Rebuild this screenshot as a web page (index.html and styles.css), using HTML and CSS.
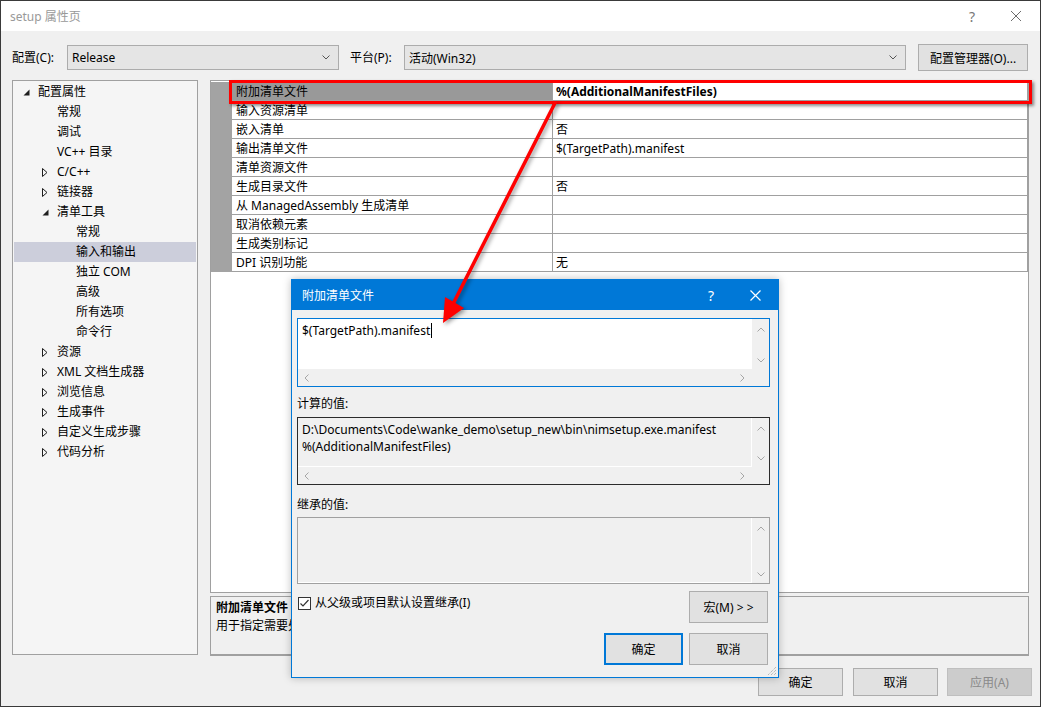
FILE: index.html
```html
<!DOCTYPE html>
<html lang="zh-CN">
<head>
  <meta charset="UTF-8">
  <title>setup 属性页</title>
  <link rel="stylesheet" href="styles.css">
</head>
<body>
<div class="window">
  <!-- 标题栏 -->
  <div class="titlebar">
    <span class="titlebar-text">setup 属性页</span>
    <span class="titlebar-help">?</span>
    <span class="titlebar-close">
      <svg viewBox="0 0 10 10" width="10" height="10"><path d="M0 0L10 10M10 0L0 10" stroke="#6d6d6d" stroke-width="1"/></svg>
    </span>
  </div>

  <!-- 配置 / 平台 -->
  <div class="toolbar">
    <span class="tb-label tb-label-config">配置(C):</span>
    <div class="combo combo-config">
      <span class="combo-text">Release</span>
      <svg class="combo-arrow" viewBox="0 0 8 5" width="8" height="5"><polyline points="0.5,0.5 4,4 7.5,0.5" fill="none" stroke="#555"/></svg>
    </div>
    <span class="tb-label tb-label-platform">平台(P):</span>
    <div class="combo combo-platform">
      <span class="combo-text">活动(Win32)</span>
      <svg class="combo-arrow" viewBox="0 0 8 5" width="8" height="5"><polyline points="0.5,0.5 4,4 7.5,0.5" fill="none" stroke="#555"/></svg>
    </div>
    <button class="btn btn-manager">配置管理器(O)...</button>
  </div>

  <div class="main">
    <!-- 左侧树 -->
    <ul class="tree">
      <li class="node l0"><span class="toggle"><svg width="7" height="7"><polygon points="6.5,0.5 6.5,6.5 0.5,6.5" fill="#1e1e1e"/></svg></span>配置属性</li>
      <li class="node l1"><span class="toggle"></span>常规</li>
      <li class="node l1"><span class="toggle"></span>调试</li>
      <li class="node l1"><span class="toggle"></span>VC++ 目录</li>
      <li class="node l1"><span class="toggle"><svg width="6" height="9"><polygon points="0.5,0.5 5,4.5 0.5,8.5" fill="none" stroke="#1e1e1e"/></svg></span>C/C++</li>
      <li class="node l1"><span class="toggle"><svg width="6" height="9"><polygon points="0.5,0.5 5,4.5 0.5,8.5" fill="none" stroke="#1e1e1e"/></svg></span>链接器</li>
      <li class="node l1"><span class="toggle"><svg width="7" height="7"><polygon points="6.5,0.5 6.5,6.5 0.5,6.5" fill="#1e1e1e"/></svg></span>清单工具</li>
      <li class="node l2"><span class="toggle"></span>常规</li>
      <li class="node l2 selected"><span class="toggle"></span>输入和输出</li>
      <li class="node l2"><span class="toggle"></span>独立 COM</li>
      <li class="node l2"><span class="toggle"></span>高级</li>
      <li class="node l2"><span class="toggle"></span>所有选项</li>
      <li class="node l2"><span class="toggle"></span>命令行</li>
      <li class="node l1"><span class="toggle"><svg width="6" height="9"><polygon points="0.5,0.5 5,4.5 0.5,8.5" fill="none" stroke="#1e1e1e"/></svg></span>资源</li>
      <li class="node l1"><span class="toggle"><svg width="6" height="9"><polygon points="0.5,0.5 5,4.5 0.5,8.5" fill="none" stroke="#1e1e1e"/></svg></span>XML 文档生成器</li>
      <li class="node l1"><span class="toggle"><svg width="6" height="9"><polygon points="0.5,0.5 5,4.5 0.5,8.5" fill="none" stroke="#1e1e1e"/></svg></span>浏览信息</li>
      <li class="node l1"><span class="toggle"><svg width="6" height="9"><polygon points="0.5,0.5 5,4.5 0.5,8.5" fill="none" stroke="#1e1e1e"/></svg></span>生成事件</li>
      <li class="node l1"><span class="toggle"><svg width="6" height="9"><polygon points="0.5,0.5 5,4.5 0.5,8.5" fill="none" stroke="#1e1e1e"/></svg></span>自定义生成步骤</li>
      <li class="node l1"><span class="toggle"><svg width="6" height="9"><polygon points="0.5,0.5 5,4.5 0.5,8.5" fill="none" stroke="#1e1e1e"/></svg></span>代码分析</li>
    </ul>

    <!-- 右侧属性表 -->
    <div class="right">
      <div class="grid">
        <div class="prop-row selected"><span class="pm"></span><span class="pn">附加清单文件</span><span class="pv">%(AdditionalManifestFiles)</span></div>
        <div class="prop-row"><span class="pm"></span><span class="pn">输入资源清单</span><span class="pv"></span></div>
        <div class="prop-row"><span class="pm"></span><span class="pn">嵌入清单</span><span class="pv">否</span></div>
        <div class="prop-row"><span class="pm"></span><span class="pn">输出清单文件</span><span class="pv">$(TargetPath).manifest</span></div>
        <div class="prop-row"><span class="pm"></span><span class="pn">清单资源文件</span><span class="pv"></span></div>
        <div class="prop-row"><span class="pm"></span><span class="pn">生成目录文件</span><span class="pv">否</span></div>
        <div class="prop-row"><span class="pm"></span><span class="pn">从 ManagedAssembly 生成清单</span><span class="pv"></span></div>
        <div class="prop-row"><span class="pm"></span><span class="pn">取消依赖元素</span><span class="pv"></span></div>
        <div class="prop-row"><span class="pm"></span><span class="pn">生成类别标记</span><span class="pv"></span></div>
        <div class="prop-row"><span class="pm"></span><span class="pn">DPI 识别功能</span><span class="pv">无</span></div>
      </div>
      <div class="desc">
        <div class="desc-title">附加清单文件</div>
        <div class="desc-text">用于指定需要处理的其他清单文件。</div>
      </div>
    </div>
  </div>

  <div class="footer">
    <button class="btn btn-foot btn-ok">确定</button>
    <button class="btn btn-foot btn-cancel">取消</button>
    <button class="btn btn-foot btn-apply" disabled>应用(A)</button>
  </div>

  <!-- 弹出的编辑对话框 -->
  <div class="dialog">
    <div class="dlg-title">
      <span class="dlg-title-text">附加清单文件</span>
      <span class="dlg-help">?</span>
      <span class="dlg-close">
        <svg viewBox="0 0 11 11" width="11" height="11"><path d="M0.5 0.5L10.5 10.5M10.5 0.5L0.5 10.5" stroke="#fff" stroke-width="1.2"/></svg>
      </span>
    </div>
    <div class="dlg-body">
      <div class="editbox editbox-active">
        <div class="editbox-text">$(TargetPath).manifest<span class="caret"></span></div>
        <div class="vscroll">
          <svg width="8" height="5"><polyline points="0.5,4.5 4,1 7.5,4.5" fill="none" stroke="#a6a6a6"/></svg>
          <svg width="8" height="5"><polyline points="0.5,0.5 4,4 7.5,0.5" fill="none" stroke="#a6a6a6"/></svg>
        </div>
        <div class="hscroll">
          <svg width="5" height="8"><polyline points="4.5,0.5 1,4 4.5,7.5" fill="none" stroke="#a6a6a6"/></svg>
          <svg width="5" height="8"><polyline points="0.5,0.5 4,4 0.5,7.5" fill="none" stroke="#a6a6a6"/></svg>
        </div>
        <div class="corner"></div>
      </div>

      <div class="dlg-label dlg-label-eval">计算的值:</div>
      <div class="editbox editbox-eval">
        <div class="editbox-text">D:\Documents\Code\wanke_demo\setup_new\bin\nimsetup.exe.manifest<br>%(AdditionalManifestFiles)</div>
        <div class="vscroll">
          <svg width="8" height="5"><polyline points="0.5,4.5 4,1 7.5,4.5" fill="none" stroke="#a6a6a6"/></svg>
          <svg width="8" height="5"><polyline points="0.5,0.5 4,4 7.5,0.5" fill="none" stroke="#a6a6a6"/></svg>
        </div>
        <div class="hscroll">
          <svg width="5" height="8"><polyline points="4.5,0.5 1,4 4.5,7.5" fill="none" stroke="#a6a6a6"/></svg>
          <svg width="5" height="8"><polyline points="0.5,0.5 4,4 0.5,7.5" fill="none" stroke="#a6a6a6"/></svg>
        </div>
        <div class="corner"></div>
      </div>

      <div class="dlg-label dlg-label-inherit">继承的值:</div>
      <div class="editbox editbox-inherit">
        <div class="editbox-text"></div>
        <div class="vscroll">
          <svg width="8" height="5"><polyline points="0.5,4.5 4,1 7.5,4.5" fill="none" stroke="#a6a6a6"/></svg>
          <svg width="8" height="5"><polyline points="0.5,0.5 4,4 7.5,0.5" fill="none" stroke="#a6a6a6"/></svg>
        </div>
      </div>

      <div class="dlg-row-inherit">
        <label class="check">
          <svg width="13" height="13"><rect x="0.5" y="0.5" width="12" height="12" fill="#fff" stroke="#333"/><polyline points="2.5,6.5 5,9 10.5,3" fill="none" stroke="#333" stroke-width="1.2"/></svg>
          <span>从父级或项目默认设置继承(I)</span>
        </label>
        <button class="btn btn-dlg">宏(M) &gt; &gt;</button>
      </div>

      <div class="dlg-buttons">
        <button class="btn btn-dlg btn-default">确定</button>
        <button class="btn btn-dlg">取消</button>
      </div>
    </div>
    <svg class="grip" width="10" height="10"><path d="M9 1L1 9M9 4L4 9M9 7L7 9" stroke="#a0a0a0" stroke-width="1" stroke-dasharray="1 1"/></svg>
  </div>

  <!-- 红色标注 -->
  <div class="mark-box"></div>
  <svg class="mark-arrow" width="1041" height="707" viewBox="0 0 1041 707">
    <line x1="555" y1="103" x2="452" y2="306" stroke="#ff0000" stroke-width="3.5" stroke-linecap="round"/>
    <polygon points="443,323 445,297 464,308" fill="#ff0000"/>
  </svg>
</div>
</body>
</html>
```

FILE: styles.css
```css
* {
  box-sizing: border-box;
}

html, body {
  margin: 0;
  padding: 0;
}

body {
  width: 1041px;
  height: 707px;
  overflow: hidden;
  background: #f0f0f0;
  font-family: "Noto Sans", "Noto Sans CJK SC", sans-serif;
  font-size: 12px;
  color: #000;
}

.window {
  position: relative;
  width: 1041px;
  height: 707px;
  border: 1px solid #3a3a3a;
  background: #f0f0f0;
}

/* 标题栏 */
.titlebar {
  display: flex;
  align-items: center;
  height: 30px;
  padding: 0 19px 0 9px;
  background: #fff;
}
.titlebar-text {
  flex: 1;
  color: #999;
  font-size: 12px;
}
.titlebar-help {
  width: 12px;
  margin-right: 33px;
  text-align: center;
  color: #777;
  font-size: 14px;
}
.titlebar-close {
  display: flex;
  width: 10px;
}

/* 配置 / 平台 */
.toolbar {
  display: flex;
  align-items: center;
  height: 49px;
  padding: 13px 0 9px 11px;
}
.tb-label {
  line-height: 18px;
}
.tb-label-config {
  width: 55px;
}
.tb-label-platform {
  width: 54px;
  margin-left: 11px;
}
.combo {
  display: flex;
  align-items: center;
  height: 25px;
  padding: 0 8px 0 4px;
  background: #e5e5e5;
  border: 1px solid #acacac;
}
.combo-text {
  flex: 1;
}
.combo-config {
  width: 272px;
}
.combo-platform {
  width: 502px;
}

.btn {
  font-family: inherit;
  font-size: 12px;
  color: #000;
  background: #e1e1e1;
  border: 1px solid #adadad;
  padding: 0;
}
.btn-manager {
  width: 110px;
  height: 27px;
  margin-left: 12px;
}

/* 主区域 */
.main {
  display: flex;
  align-items: flex-start;
  height: 577px;
  padding-left: 11px;
}

.tree {
  list-style: none;
  margin: 0;
  padding: 1px 0 0;
  width: 186px;
  height: 575px;
  border: 1px solid #a0a0a0;
  background: #f5f5f5;
}
.node {
  display: flex;
  align-items: center;
  height: 20px;
  line-height: 20px;
  margin: 0 1px;
  white-space: nowrap;
}
.node.l0 {
  padding-left: 8px;
}
.node.l1 {
  padding-left: 27px;
}
.node.l2 {
  padding-left: 46px;
}
.node.selected {
  background: #cccedb;
}
.toggle {
  display: flex;
  align-items: center;
  width: 16px;
  height: 20px;
  padding-left: 1px;
}

.right {
  width: 819px;
  margin-left: 12px;
}

.grid {
  height: 513px;
  padding-top: 1px;
  border: 1px solid #a0a0a0;
  background: #fff;
}
.prop-row {
  display: flex;
  height: 19px;
}
.pm {
  width: 21px;
  background: #a3a3a3;
}
.pn, .pv {
  padding-top: 1px;
  line-height: 17px;
  border-bottom: 1px solid #a0a0a0;
  white-space: nowrap;
  overflow: hidden;
}
.pn {
  width: 321px;
  padding-left: 4px;
  border-right: 1px solid #a0a0a0;
}
.pv {
  width: 475px;
  padding-left: 3px;
  border-right: 1px solid #a0a0a0;
}
.prop-row.selected .pn {
  background: #999;
}
.prop-row.selected .pv {
  font-weight: bold;
}

.desc {
  height: 60px;
  margin-top: 3px;
  padding: 2px 5px 0;
  border: 1px solid #a0a0a0;
  border-bottom: 2px solid #a0a0a0;
  line-height: 18px;
}
.desc-title {
  font-weight: bold;
}

/* 底部按钮 */
.footer {
  display: flex;
  justify-content: flex-end;
  padding: 11px 8px 0 0;
}
.btn-foot {
  width: 85px;
  height: 28px;
}
.btn-ok {
  margin-right: 10px;
}
.btn-cancel {
  margin-right: 9px;
}
.btn-apply {
  background: #cccccc;
  border-color: #bfbfbf;
  color: #8a8a8a;
}

/* 对话框 */
.dialog {
  position: absolute;
  left: 290px;
  top: 278px;
  width: 488px;
  height: 399px;
  border: 1px solid #0078d7;
  background: #f0f0f0;
  box-shadow: 0 0 8px rgba(0, 0, 0, 0.25);
}
.dlg-title {
  display: flex;
  align-items: center;
  height: 30px;
  padding: 0 17px 0 10px;
  background: #0078d7;
  color: #fff;
}
.dlg-title-text {
  flex: 1;
}
.dlg-help {
  width: 12px;
  margin-right: 33px;
  text-align: center;
  font-size: 14px;
}
.dlg-close {
  display: flex;
}
.dlg-body {
  display: flex;
  flex-direction: column;
  padding: 8px 8px 0 5px;
}

.editbox {
  display: grid;
  grid-template-columns: 1fr 17px;
  grid-template-rows: 1fr 17px;
  height: 69px;
  border: 1px solid #a0a0a0;
  background: #f0f0f0;
}
.editbox-text {
  padding: 3px 4px;
  line-height: 17px;
  white-space: nowrap;
  overflow: hidden;
}
.editbox-active {
  border-color: #0078d7;
}
.editbox-active .editbox-text {
  background: #fff;
}
.caret {
  display: inline-block;
  width: 1px;
  height: 15px;
  margin-left: 1px;
  vertical-align: -3px;
  background: #000;
}
.editbox-eval {
  height: 68px;
  border-color: #2b2b2b;
}
.editbox-eval .editbox-text,
.editbox-inherit .editbox-text {
  border-right: 1px solid #fff;
  border-bottom: 1px solid #fff;
}
.editbox-inherit {
  grid-template-rows: 1fr;
  height: 67px;
}
.vscroll {
  display: flex;
  flex-direction: column;
  justify-content: space-between;
  align-items: center;
  padding: 8px 0 6px;
}
.hscroll {
  display: flex;
  justify-content: space-between;
  align-items: center;
  padding: 0 7px 0 6px;
}

.dlg-label {
  line-height: 16px;
}
.dlg-label-eval {
  margin-top: 9px;
  margin-bottom: 5px;
}
.dlg-label-inherit {
  margin-top: 12px;
  margin-bottom: 4px;
}

.dlg-row-inherit {
  display: flex;
  justify-content: space-between;
  align-items: flex-start;
  margin-top: 7px;
  padding-right: 2px;
}
.check {
  display: flex;
  align-items: center;
  margin-top: 4px;
  padding-left: 1px;
  line-height: 16px;
}
.check svg {
  margin-right: 4px;
}
.btn-dlg {
  width: 79px;
  height: 32px;
}
.dlg-buttons {
  display: flex;
  justify-content: flex-end;
  gap: 6px;
  margin-top: 10px;
  padding-right: 2px;
}
.btn-default {
  border: 2px solid #0078d7;
}
.grip {
  position: absolute;
  right: 1px;
  bottom: 1px;
}

/* 红色标注 */
.mark-box {
  position: absolute;
  left: 228px;
  top: 79px;
  width: 803px;
  height: 24px;
  border: 3px solid #ff0000;
  box-shadow: 2px 2px 3px rgba(0, 0, 0, 0.45);
}
.mark-arrow {
  position: absolute;
  left: -1px;
  top: -1px;
  filter: drop-shadow(2px 2px 2px rgba(0, 0, 0, 0.4));
}
```
